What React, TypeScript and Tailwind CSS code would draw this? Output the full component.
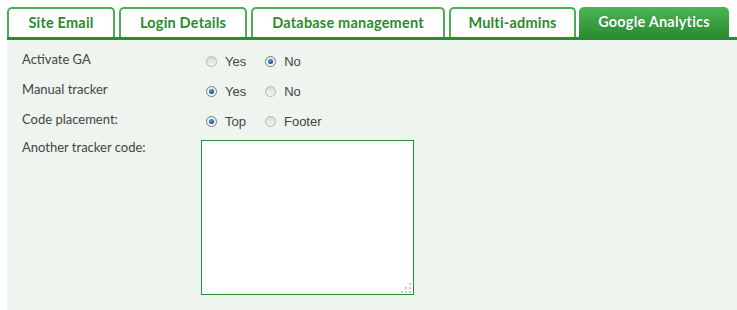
import React from "react";

const tabs = [
    { label: "Site Email", w: "w-[108px]" },
    { label: "Login Details", w: "w-[128px]" },
    { label: "Database management", w: "w-[194px]" },
    { label: "Multi-admins", w: "w-[127px]" },
];

function Radio({ checked, label }: { checked?: boolean; label: string }) {
    return (
        <label className="flex items-center">
            {checked ? (
                <span className="flex h-[11px] w-[11px] items-center justify-center rounded-full border border-[#7a7a7a] bg-gradient-to-b from-[#e6e6e6] to-white">
                    <span className="h-[5px] w-[5px] rounded-full bg-[radial-gradient(circle_at_40%_35%,#6aa6e0,#0f4e95_70%)]" />
                </span>
            ) : (
                <span className="h-[11px] w-[11px] rounded-full border border-[#b4b4b4] bg-gradient-to-b from-[#d9d9d9] to-[#f7f7f7]" />
            )}
            <span className="ml-[8px] font-['Liberation_Sans',sans-serif] text-[13px] text-[#444]">{label}</span>
        </label>
    );
}

function Row({ label, options }: { label: string; options: [string, boolean][] }) {
    return (
        <div className="flex h-[30px]">
            <div className="w-[179px] pt-[3px] text-[13px] text-[#444]">{label}</div>
            <div className="flex items-start gap-[19px] pl-[5px] pt-[5px]">
                {options.map(([t, c]) => (
                    <Radio key={t} label={t} checked={c} />
                ))}
            </div>
        </div>
    );
}

export default function App() {
    return (
        <div className="h-[310px] w-[737px] bg-white pl-[7px] pt-[7px] font-['Lato',sans-serif]">
            {/* tabs */}
            <div className="flex h-[30px] items-end gap-[4px]">
                {tabs.map((t) => (
                    <div
                        key={t.label}
                        className={`${t.w} flex h-[30px] items-center justify-center rounded-t-[5px] border-2 border-b-0 border-[#4cae52] bg-white text-[14.5px] font-bold tracking-[0.2px] text-[#2b8a2e]`}
                    >
                        {t.label}
                    </div>
                ))}
                <div className="ml-[-1px] flex h-[30px] w-[150px] items-center justify-center rounded-t-[5px] bg-gradient-to-b from-[#4cb653] to-[#2a8c32] text-[14.5px] font-bold tracking-[0.2px] text-white [text-shadow:0_0_1px_rgba(0,60,0,0.5)]">
                    Google Analytics
                </div>
            </div>
            <div className="h-[3px] bg-[#2b8b34]" />

            {/* form */}
            <div className="h-[270px] bg-[#eef5ee] pl-[15px] pt-[7px]">
                <Row label="Activate GA" options={[["Yes", false], ["No", true]]} />
                <Row label="Manual tracker" options={[["Yes", true], ["No", false]]} />
                <Row label="Code placement:" options={[["Top", true], ["Footer", false]]} />
                <div className="mt-[3px] flex items-start">
                    <div className="-mt-[2px] w-[179px] text-[13px] text-[#444]">Another tracker code:</div>
                    <div className="relative h-[155px] w-[213px] border border-[#2a8c2f] bg-white">
                        <svg className="absolute bottom-[1px] right-[1px]" width="11" height="11" viewBox="0 0 11 11">
                            <rect x="8" y="1" width="2" height="2" fill="#c8c8c8" />
                            <rect x="4" y="5" width="2" height="2" fill="#c8c8c8" />
                            <rect x="8" y="5" width="2" height="2" fill="#c8c8c8" />
                            <rect x="0" y="9" width="2" height="2" fill="#c8c8c8" />
                            <rect x="4" y="9" width="2" height="2" fill="#c8c8c8" />
                            <rect x="8" y="9" width="2" height="2" fill="#c8c8c8" />
                        </svg>
                    </div>
                </div>
            </div>
        </div>
    );
}
